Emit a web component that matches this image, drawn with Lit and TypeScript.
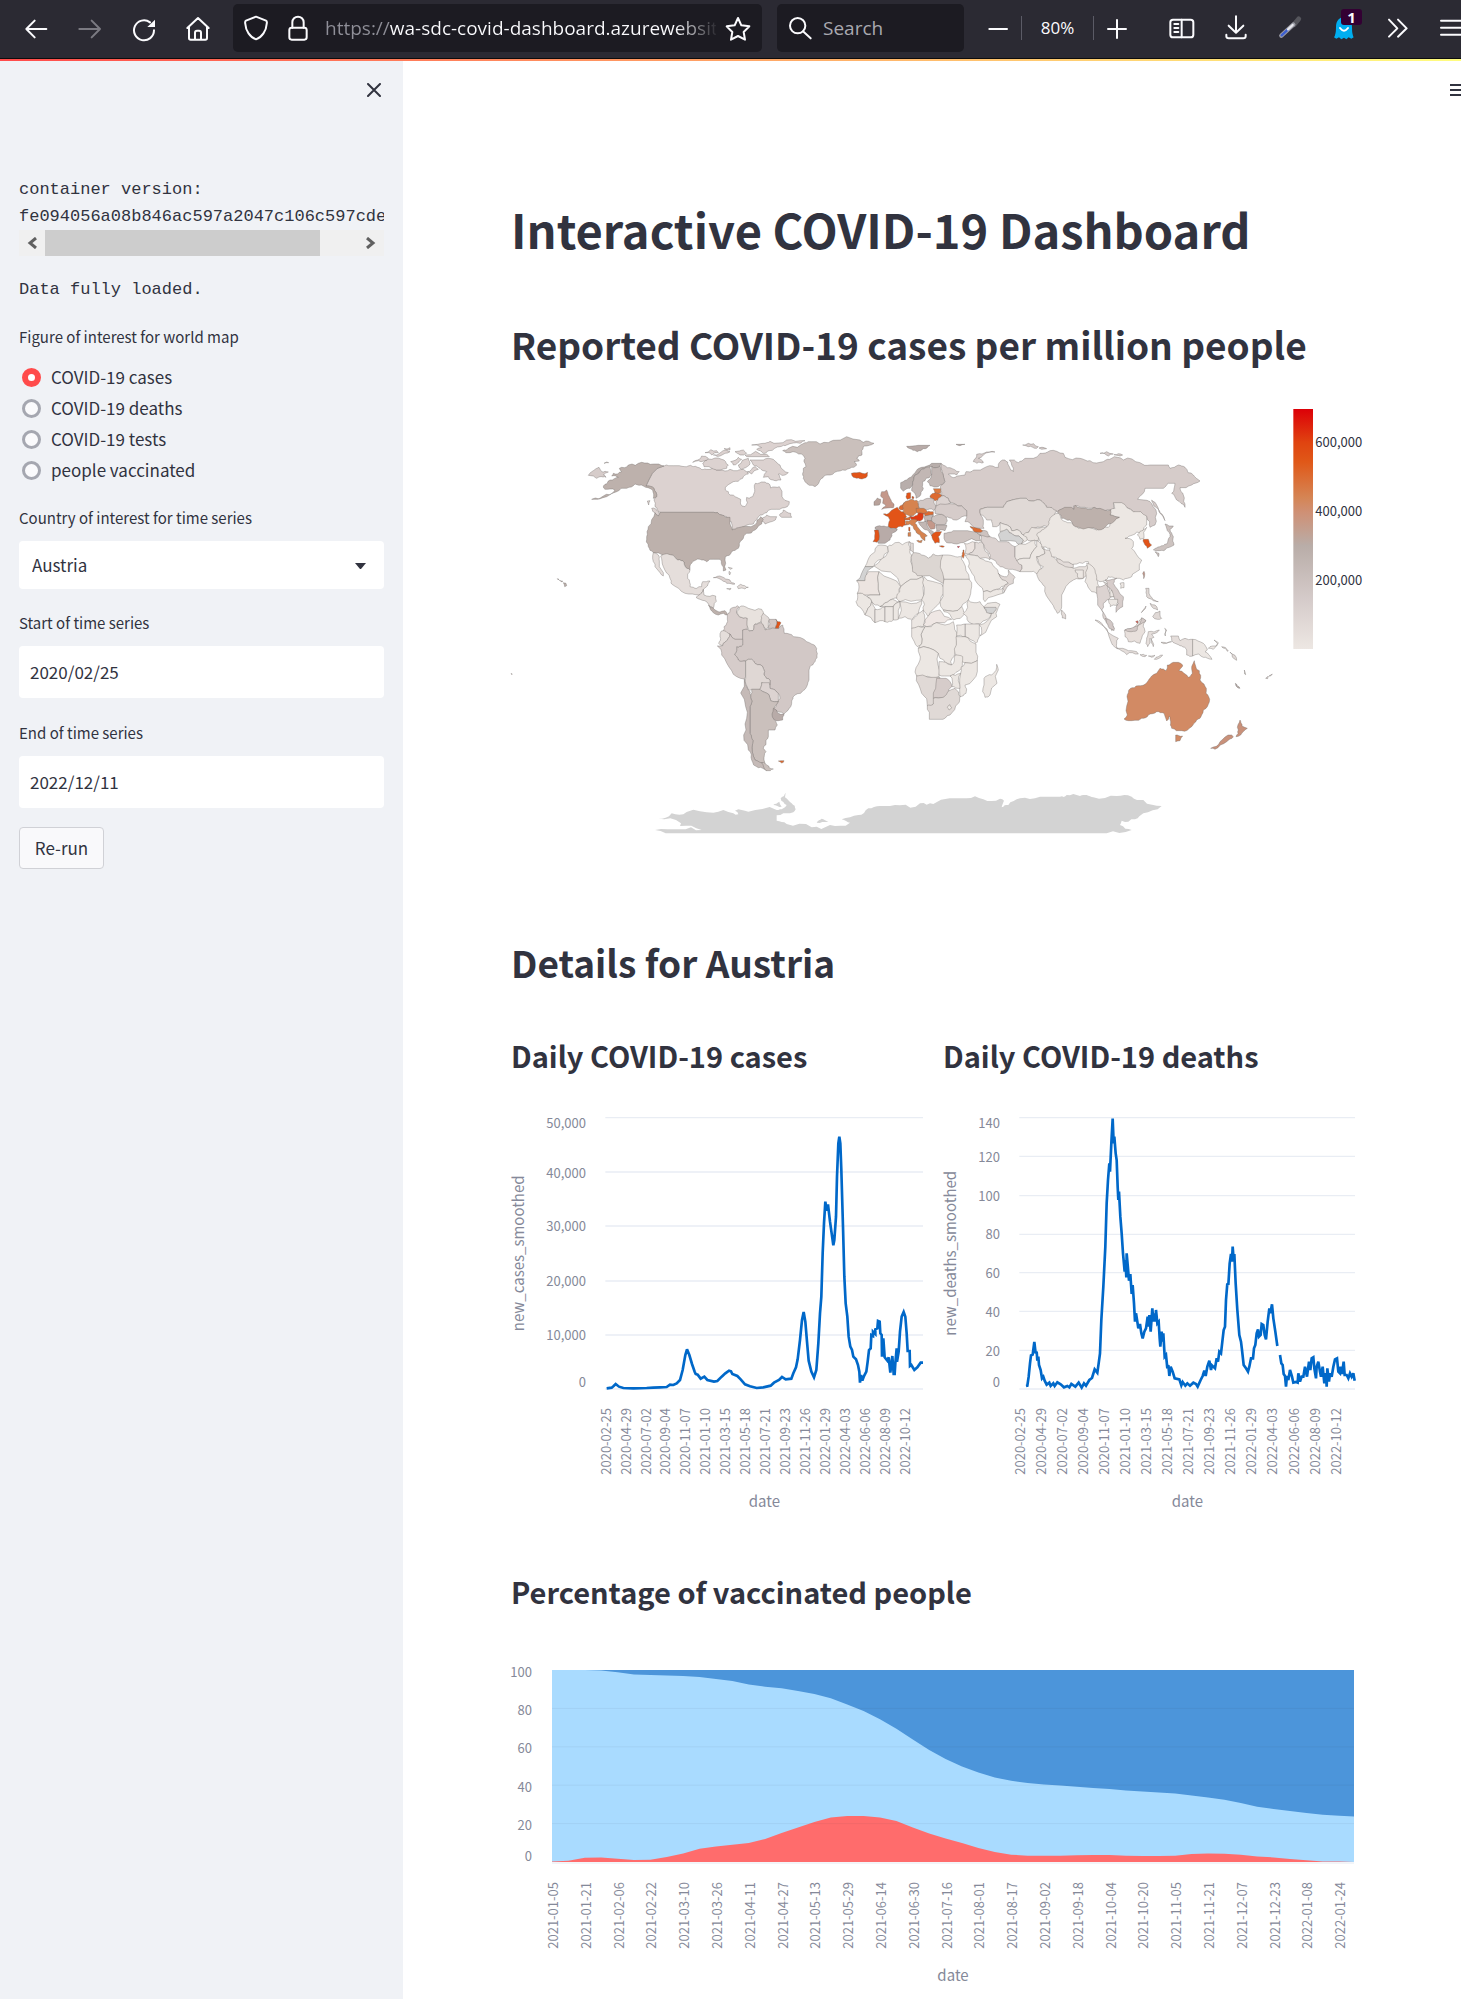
import { LitElement, html, svg, css } from "lit";
import { customElement, state } from "lit/decorators.js";

type Shape = [fill: string, points: string];

/* ---------- world map geometry (three units per pixel) ---------- */

const AMERICAS: Shape[] = [
  ["#cac0bc", "848,152 865,145 915,128 935,125 985,128 1000,121 1080,120 1090,127 1122,130 1108,136 1090,140 1086,165 1070,175 1078,183 1062,185 1070,195 1050,205 1020,213 990,225 972,228 958,245 945,260 928,256 915,245 908,225 910,205 918,200 912,185 915,175 905,162 870,158"],
  ["#dcd2d0", "492,198 520,197 555,200 572,196 600,204 620,208 660,210 690,208 712,212 730,208 745,222 728,235 700,245 680,258 676,270 690,285 710,292 722,298 726,318 735,320 742,308 740,292 758,290 764,275 766,250 790,246 808,252 812,264 838,260 846,290 868,305 862,320 830,328 800,338 780,345 770,358 760,372 735,378 710,385 697,390 694,365 680,350 665,345 640,337 480,337 465,320 462,300 470,290 462,265 438,258"],
  ["#dcd2d0", "780,355 800,345 812,350 830,350 826,360 795,372 788,365"],
  ["#dcd2d0", "838,345 850,330 872,340 875,352 845,352"],
  ["#dcd2d0", "578,187 605,168 625,175 612,183"],
  ["#dcd2d0", "608,190 625,177 665,178 685,195 680,205 640,207 612,200"],
  ["#dcd2d0", "615,158 650,152 655,158 635,165"],
  ["#dcd2d0", "640,165 680,150 690,155 660,168"],
  ["#dcd2d0", "672,146 690,143 690,150"],
  ["#dcd2d0", "755,135 790,130 810,124 860,120 915,122 900,130 860,135 840,140 808,152 790,160 770,148 785,143"],
  ["#dcd2d0", "705,155 730,150 740,160 720,165"],
  ["#dcd2d0", "735,165 800,163 808,170 740,170"],
  ["#dcd2d0", "692,185 715,172 725,178 712,190 700,195"],
  ["#dcd2d0", "750,180 790,180 820,178 840,195 865,218 855,225 835,222 843,240 825,242 805,230 790,232 800,215 780,205 760,195"],
  ["#dcd2d0", "715,195 745,175 748,195 725,208"],
  ["#dcd2d0", "742,215 765,200 775,208 755,222"],
  ["#bdb1ac", "492,198 438,258 462,265 470,290 460,295 458,270 430,258 405,252 380,265 350,275 320,290 275,298 310,288 345,270 315,268 310,258 330,240 355,232 335,228 340,220 365,215 358,205 385,195 425,187 460,192"],
  ["#d6ccca", "265,226 297,202 305,215 325,216 310,225 318,232 300,230 290,235 280,228"],
  ["#d6ccca", "312,190 320,186 326,188"],
  ["#dcd2d0", "455,325 475,335 478,348 465,340"],
  ["#dcd2d0", "442,303 450,302 446,315"],
  ["#bdb1ac", "480,337 640,337 665,345 690,352 697,390 715,383 765,374 782,350 790,358 785,372 765,390 740,400 730,415 718,430 715,445 695,455 676,470 678,510 670,513 664,490 660,478 640,478 620,485 600,478 575,490 570,510 560,505 548,482 530,478 520,466 460,458 445,440 440,410 445,380 465,338 475,348"],
  ["#e5dedb", "482,468 520,466 530,478 548,482 560,505 570,510 563,535 570,560 590,565 605,560 608,545 630,543 622,558 610,568 598,585 555,580 515,552 510,535 490,500"],
  ["#e5dedb", "460,458 475,465 478,490 490,528 480,518 465,492"],
  ["#e3dcd9", "598,585 610,568 612,585 647,588 642,618 640,625 625,612 600,598 588,592"],
  ["#bdb1ac", "625,615 640,625 655,635 675,632 682,645 670,640 655,645 640,638"],
  ["#dcd2d0", "640,533 665,530 690,540 705,552 680,550 660,537"],
  ["#e5dedb", "712,560 722,553 745,562 735,567 715,566"],
  ["#e5dedb", "680,566 693,565 690,570"],
  ["#e5dedb", "685,502 697,505 690,508"],
  ["#e5dedb", "687,514 692,518 689,525"],
  ["#bdb1ac", "190,548 198,550 200,557 194,560"],
  ["#bdb1ac", "178,541 188,543 186,546"],
  ["#bdb1ac", "172,536 176,537 175,540"],
  ["#bdb1ac", "33,821 36,821 36,824"],
  ["#d9cfcd", "682,645 690,628 712,617 718,622 710,640 718,650 742,655 742,688 728,690 728,718 705,718 690,702 670,692 680,670"],
  ["#e8e2de", "718,622 730,618 745,625 785,628 790,645 783,665 765,672 758,692 748,693 742,655 718,650 710,635"],
  ["#e3dcd9", "790,640 808,658 805,680 798,690 790,680 783,660"],
  ["#d2c7c5", "808,658 828,658 826,685 805,685"],
  ["#d2c8c6", "728,690 742,688 748,693 758,692 765,672 783,668 795,690 826,685 836,685 848,675 853,700 880,710 920,725 948,742 952,760 945,785 930,800 927,840 915,868 885,885 876,900 872,920 852,942 822,925 840,895 835,880 810,865 810,840 792,825 790,805 765,790 755,778 737,783 715,780 703,762 710,740 728,735"],
  ["#e25418", "828,658 843,668 836,685 826,685"],
  ["#e5dedb", "664,693 690,702 685,715 668,737 656,730 660,710"],
  ["#d6ccca", "668,737 685,715 690,702 705,718 728,718 728,735 710,740 703,762 715,780 737,783 737,830 733,837 695,812 665,765 652,738"],
  ["#dfd7d4", "737,783 755,778 765,790 790,805 792,825 810,840 810,855 785,848 780,868 755,868 745,870 737,835"],
  ["#dcd3d1", "785,848 808,848 810,865 835,880 835,905 812,902 805,882 780,868"],
  ["#cac0bc", "755,868 780,868 805,882 812,902 835,905 822,925 822,958 832,975 825,990 805,990 805,1010 798,1020 790,1045 798,1055 792,1080 795,1092 765,1080 758,1030 750,1000 750,920 752,885"],
  ["#b8aba8", "820,925 852,942 848,960 822,958"],
  ["#c5bab7", "733,837 745,870 752,885 750,920 750,1000 758,1030 765,1080 795,1095 800,1112 775,1103 755,1080 745,1050 738,990 737,920"],
  ["#cac0bc", "785,1088 800,1095 820,1107 800,1112"],
  ["#dd6a30", "835,1083 852,1082 845,1089"],
];

const AFRICA_EURASIA: Shape[] = [
  ["#e25418", "34,160 50,158 83,157 82,168 60,176 40,172"],
  ["#d6ccca", "303,130 330,143 358,155 350,165 325,162 345,172 375,165 378,155 400,150 440,140 475,142 480,125 495,120 505,135 512,150 520,155 515,135 508,120 535,128 555,115 600,100 630,92 670,100 675,112 720,115 750,122 790,125 815,115 850,120 900,128 930,135 985,135 990,145 1015,135 1035,142 1060,165 1080,183 1055,195 1020,203 1030,225 1035,262 1010,240 995,220 1005,190 985,190 970,205 915,205 893,238 930,245 948,270 945,315 930,322 920,290 880,275 845,250 820,250 822,265 810,270 780,268 745,265 700,258 702,268 665,268 650,275 620,262 600,240 575,243 540,235 500,245 490,262 450,262 420,268 422,285 430,300 432,325 400,320 375,305 380,288 380,272 345,252 333,248 325,235 305,228 302,206 315,185 308,160"],
  ["#b8aba8", "200,79 235,76 270,76 250,86 232,95 215,88"],
  ["#b8aba8", "348,73 375,73 360,77"],
  ["#d6ccca", "400,125 410,103 440,96 465,96 430,105 415,115 430,128 410,130"],
  ["#d6ccca", "548,75 565,70 595,80 590,85 565,80"],
  ["#d6ccca", "597,84 620,86 605,88"],
  ["#d6ccca", "780,100 820,102 805,108"],
  ["#d6ccca", "822,104 848,105 840,108"],
  ["#c4988a", "125,215 140,210 145,225 150,235 162,252 160,263 125,268 138,258 128,250 130,235 122,228"],
  ["#b8a29b", "102,245 112,234 122,238 118,255 102,256"],
  ["#b8aeab", "182,188 200,180 225,158 245,142 275,130 303,130 300,138 275,140 245,148 225,165 218,195 210,205 190,214 182,205"],
  ["#c2b7b4", "218,195 225,165 245,148 270,140 275,165 258,175 248,185 250,205 240,228 228,235 215,212"],
  ["#c2b7b4", "275,140 300,138 308,160 314,185 295,200 270,197 262,185 275,165"],
  ["#e25418", "200,220 212,218 212,235 202,238"],
  ["#e25418", "216,229 222,231 220,237 216,235"],
  ["#dd7a40", "280,206 302,206 302,220 285,218"],
  ["#dd6a30", "270,228 285,218 305,225 302,235 285,243 270,232"],
  ["#d2c8c6", "235,245 262,235 282,238 288,258 282,272 255,268 235,260"],
  ["#dd6a30", "180,258 193,247 193,262 188,270 176,265"],
  ["#e25418", "130,282 148,278 160,268 172,262 190,275 200,290 195,300 198,315 175,320 168,326 145,320 150,300 145,290"],
  ["#d6834f", "195,245 215,238 233,243 237,262 228,280 210,288 195,282 190,265"],
  ["#b8aba8", "105,322 118,317 145,320 172,327 155,342 150,360 135,370 115,370 112,340"],
  ["#e25418", "103,330 115,330 110,367 99,365"],
  ["#dd6a30", "193,292 215,288 210,300 195,300"],
  ["#dd7a40", "228,265 245,265 262,275 250,282 230,278"],
  ["#dd6a30", "252,280 280,275 280,283 255,288"],
  ["#e03a12", "210,290 232,286 235,279 250,280 248,298 230,304 212,295"],
  ["#c2b7b4", "250,290 280,284 275,302 255,305"],
  ["#d6834f", "195,305 215,298 232,300 225,310 240,330 262,348 255,350 255,362 245,355 240,345 222,328 210,312 198,315"],
  ["#d6834f", "230,362 247,360 244,368"],
  ["#d6834f", "204,338 212,337 212,349 204,349"],
  ["#e25418", "206,322 210,322 210,334 206,332"],
  ["#c2b7b4", "235,305 255,303 262,318 270,330 280,335 275,348 262,330 240,315"],
  ["#c4988a", "262,300 274,302 286,314 284,326 272,328 264,316"],
  ["#cdc3c0", "278,288 300,283 318,290 322,303 318,312 290,315 275,302"],
  ["#c2b7b4", "288,315 320,315 315,332 290,333"],
  ["#e25418", "275,345 288,335 305,335 300,345 295,350 298,368 285,370 278,358"],
  ["#e25418", "298,378 313,379 310,382"],
  ["#dcd3d1", "288,245 305,228 325,235 333,248 320,260 288,258"],
  ["#d6ccca", "288,258 345,252 380,272 380,288 355,298 345,300 335,295 318,292 300,283 285,280"],
  ["#cdc3c0", "312,340 340,332 375,332 405,335 420,345 422,362 370,368 350,372 320,368"],
  ["#cdc3c0", "405,335 440,333 450,350 435,355 422,345"],
  ["#dd6a30", "390,319 428,333 423,337 403,335"],
  ["#dc0020", "351,380 359,379 356,383"],
  ["#ece4e0", "373,370 405,367 405,385 385,403 375,400"],
  ["#dd6a30", "369,390 372,390 370,415 365,408"],
  ["#e3dcd9", "405,367 425,365 445,400 450,420 420,415 385,403 405,385"],
  ["#ece7e3", "375,405 385,403 420,415 455,428 475,460 490,475 505,478 500,498 470,508 430,515 405,480 385,440"],
  ["#ece7e3", "430,515 470,508 490,503 488,520 435,545"],
  ["#dfd7d4", "475,460 500,470 505,450 525,472 520,490 490,520 488,503 505,490"],
  ["#dcd3d1", "420,345 450,350 475,365 500,365 525,380 525,410 545,435 540,455 495,445 470,430 450,415 435,385 425,365"],
  ["#e0d9d6", "420,268 450,262 490,262 500,245 540,235 575,243 600,240 620,262 650,272 645,290 625,320 600,322 575,325 550,345 535,330 515,332 480,308 470,320 458,320 455,300 440,300 422,285"],
  ["#ece7e3", "480,308 515,332 535,330 550,345 575,345 560,362 545,372 550,360 520,345 500,328 480,335"],
  ["#d3d3d3", "475,345 500,328 520,345 550,360 540,375 510,362 480,362"],
  ["#e8e2de", "550,345 575,322 622,325 600,345 595,362 565,362"],
  ["#ece7e3", "525,380 545,372 585,360 590,380 570,415 530,422 525,400"],
  ["#ece7e3", "530,422 570,415 590,380 590,362 610,380 615,400 590,410 605,450 590,462 575,455 540,455 545,435"],
  ["#e6e0dc", "605,382 635,390 650,420 700,445 735,440 750,430 760,445 735,470 700,480 665,525 665,560 652,580 635,550 615,500 605,488 590,462 610,440 590,410 615,400"],
  ["#e3dcd9", "650,415 700,433 700,443 655,429"],
  ["#ece7e3", "705,450 730,450 730,475 715,475"],
  ["#e3dcd9", "665,570 677,585 677,597 667,594"],
  ["#ece7e3", "120,375 143,380 145,395 105,430 100,440 75,440 92,405 110,380"],
  ["#d3d3d3", "75,440 100,440 80,460 72,482 50,482"],
  ["#ece7e3", "143,380 165,368 208,365 210,385 215,405 218,445 248,470 182,500 102,438 145,395"],
  ["#e0d9d6", "208,365 220,370 220,398 210,390"],
  ["#dcd6d2", "220,398 245,405 265,415 280,402 308,405 312,492 250,468 218,455"],
  ["#ece7e3", "308,405 340,408 365,410 370,425 388,478 312,478"],
  ["#ece4e0", "50,482 75,482 85,455 117,455 120,525 70,525 52,520"],
  ["#ece7e3", "117,455 182,500 180,530 150,540 120,560 95,545 80,528 120,525"],
  ["#ece7e3", "182,500 248,470 252,490 245,540 180,545 170,530"],
  ["#ece7e3", "252,470 305,492 302,545 265,590 250,570 245,540"],
  ["#ece7e3", "312,478 388,478 395,500 385,540 365,560 310,570 300,545"],
  ["#ece7e3", "52,520 80,528 95,545 75,585 48,545"],
  ["#ece7e3", "95,545 105,565 105,608 75,585"],
  ["#ece7e3", "105,568 135,560 135,605 105,608"],
  ["#ece7e3", "120,560 150,540 180,545 160,560 135,560"],
  ["#ece7e3", "135,560 160,560 160,600 135,605"],
  ["#ece7e3", "160,560 180,545 175,598 160,600"],
  ["#ece7e3", "180,545 245,542 235,580 215,598 175,595"],
  ["#ece7e3", "235,580 250,570 255,600 250,620 215,625 215,600"],
  ["#efe7e4", "255,600 300,570 335,598 290,608 250,615"],
  ["#ece7e3", "310,570 365,560 375,580 340,600 312,575"],
  ["#ece7e3", "385,540 420,545 440,575 455,580 420,612 385,605 370,580"],
  ["#ece7e3", "432,560 480,553 470,590 420,648 418,615 455,580"],
  ["#d3d3d3", "432,562 468,562 460,580 440,578"],
  ["#ece7e3", "375,612 418,612 418,650 408,670 375,650"],
  ["#ece7e3", "350,615 375,612 375,650 348,648"],
  ["#ece7e3", "255,620 290,608 340,605 350,650 345,700 335,735 300,715 295,700 235,685 245,670"],
  ["#ece7e3", "215,625 255,620 245,670 232,680 215,650"],
  ["#ece7e3", "348,650 375,650 408,672 412,722 375,728 345,700"],
  ["#ece7e3", "235,685 295,700 297,770 230,768 240,720"],
  ["#ece7e3", "297,725 335,735 345,705 368,710 365,745 330,768 297,765"],
  ["#ece7e3", "375,728 412,722 412,755 375,795 378,820 360,830 362,760"],
  ["#ece7e3", "330,768 362,760 360,805 335,800"],
  ["#e0d9d6", "230,768 300,772 285,820 278,855 262,857 245,820"],
  ["#d6ccca", "290,775 318,775 335,800 310,832 280,835"],
  ["#e0d9d6", "262,857 280,852 280,835 310,832 345,805 360,830 355,850 330,885 300,898 268,898"],
  ["#ece7e3", "322,862 330,854 335,862 327,870"],
  ["#ece7e3", "470,733 475,750 450,825 435,832 428,815 432,775 455,765"],
];

const ASIA_PACIFIC: Shape[] = [
  ["#ece7e3", "175,340 185,358 210,368 235,385 290,390 325,382 330,372 358,352 330,345 330,330 345,325 340,308 365,308 400,335 440,348 440,375 425,395 398,405 375,415 400,425 395,445 425,480 418,510 395,530 370,540 345,535 325,530 300,545 285,530 265,485 230,492 180,478 155,470 150,445 125,440 118,420 110,405 125,390 145,375 150,355"],
  ["#bdb1ac", "172,337 185,327 222,328 225,316 265,328 300,325 332,330 330,345 358,352 325,372 295,390 235,382 210,360 185,355"],
  ["#ece7e3", "360,550 372,548 372,563 362,565"],
  ["#ece7e3", "260,490 285,510 290,540 298,560 290,580 275,575 255,545"],
  ["#dcd3d1", "290,560 320,550 345,590 320,600 310,610 305,630 325,660 342,685 335,692 315,660 305,630"],
  ["#ece7e3", "310,545 330,550 350,590 330,590"],
  ["#d6ccca", "315,540 350,535 340,550 370,590 368,620 348,637 355,610 335,570"],
  ["#ece7e3", "325,598 353,598 351,616 331,620"],
  ["#d2c8c6", "315,655 335,665 342,692 325,680"],
  ["#e5dedb", "285,660 305,670 355,715 352,745 335,730"],
  ["#e5dedb", "350,745 385,752 415,762 380,764"],
  ["#e5dedb", "420,764 440,766 435,770"],
  ["#e5dedb", "445,768 465,766 455,772"],
  ["#e5dedb", "463,778 488,765 475,770"],
  ["#cdc3c0", "460,450 480,440 500,432 510,410 500,385 495,372 520,378 510,388 520,410 522,435 495,450 478,452"],
  ["#cdc3c0", "465,455 477,460 475,470"],
  ["#d6ccca", "455,300 470,315 492,352 495,362 480,340 462,318"],
  ["#ece7e3", "412,405 432,388 440,382 432,415 420,418"],
  ["#e25418", "430,418 445,418 455,435 442,445 435,435"],
  ["#c4988a", "428,520 432,514 434,526 431,536"],
  ["#e0d9d6", "437,565 447,565 447,580 457,595 475,605 460,602 440,590"],
  ["#e0d9d6", "450,610 465,615 473,630 460,625"],
  ["#e0d9d6", "458,650 480,633 485,655 472,658"],
  ["#e0d9d6", "424,638 438,618 436,626"],
  ["#e8e0dc", "373,690 405,680 425,655 438,662 430,680 432,700 420,730 385,725 375,710"],
  ["#d2c8c6", "375,690 405,680 425,653 438,662 415,675 410,692 390,695"],
  ["#dc2010", "407,665 413,662 413,670"],
  ["#e5dedb", "445,695 478,690 455,702 462,712 455,715 460,740 450,715 443,740 440,720"],
  ["#e5dedb", "494,685 500,690 496,708"],
  ["#e5dedb", "483,727 515,725 500,729"],
  ["#e5dedb", "512,708 535,708 540,722 555,715 578,718 578,768 560,765 560,750 545,738 525,730"],
  ["#ece7e3", "578,718 610,730 622,750 615,755 636,778 610,772 595,762 578,768"],
  ["#ece7e3", "625,745 650,738 655,728 642,720 652,730 640,748"],
  ["#e0d9d6", "665,740 685,752 682,754"],
  ["#e0d9d6", "690,756 705,766 710,781"],
  ["#cac0bc", "733,810 737,824 734,822"],
  ["#b8aba8", "706,850 720,865 714,864"],
  ["#dcd3d1", "797,835 805,828 803,836"],
  ["#dcd3d1", "807,828 817,822 812,828"],
  ["#d28a64", "390,866 415,857 440,848 455,828 480,805 498,812 502,795 520,787 548,795 537,812 565,832 573,825 575,800 583,782 590,808 598,812 600,840 612,852 618,880 626,890 622,920 605,945 590,960 575,980 545,992 515,985 512,965 508,948 500,963 492,940 470,935 445,945 425,955 385,962 372,957 382,945 381,890"],
  ["#d28a64", "527,1005 548,1008 540,1022 527,1025"],
  ["#c9917a", "720,960 726,978 742,985 722,1005 708,1010 715,990"],
  ["#c9917a", "632,1045 660,1025 695,1005 700,1010 680,1025 645,1048"],
];

const ANTARCTICA = [
  "530,1300 465,1290 540,1288 605,1290 540,1278 543,1270 475,1256 515,1240 560,1236 640,1238 700,1240 715,1243 705,1232 745,1235 830,1230 850,1225 860,1215 842,1195 857,1178 855,1192 875,1210 887,1228 870,1240 830,1246 830,1262 860,1272 935,1282 990,1275 1050,1268 1025,1258 1075,1245 1105,1225 1140,1218 1200,1216 1260,1210 1300,1212 1400,1195 1450,1198 1500,1196 1512,1202 1505,1222 1525,1215 1560,1195 1620,1190 1680,1190 1700,1185 1740,1188 1760,1185 1780,1192 1850,1188 1895,1190 1930,1200 1985,1218 1930,1240 1905,1258 1865,1262 1860,1275 1895,1290 1820,1300",
  "950,1268 965,1256 985,1265",
  "820,1215 838,1205 845,1220",
];

/** Splits long edges at a nudged midpoint; both sides of a shared border get the same nudge. */
function coastline(points: string): string {
  const pts = points.split(" ").map((p) => p.split(",").map(Number));
  const out: string[] = [];
  const split = (a: number[], b: number[], depth: number) => {
    const len = Math.hypot(b[0] - a[0], b[1] - a[1]);
    if (depth === 0 || len < 9 || a[0] === b[0] || a[1] === b[1]) return;
    const [p, q] = a[0] < b[0] ? [a, b] : [b, a];
    const h = Math.sin(p[0] * 12.9 + p[1] * 78.2 + q[0] * 37.7 + q[1] * 9.1) * 43758.5;
    const k = (h - Math.floor(h) - 0.5) * 0.34;
    const m = [
      Math.round((p[0] + q[0]) / 2 - (q[1] - p[1]) * k),
      Math.round((p[1] + q[1]) / 2 + (q[0] - p[0]) * k),
    ];
    split(a, m, depth - 1);
    out.push(m.join(","));
    split(m, b, depth - 1);
  };
  pts.forEach((a, i) => {
    out.push(a.join(","));
    split(a, pts[(i + 1) % pts.length], 2);
  });
  return out.join(" ");
}

const land = (shapes: Shape[]) =>
  shapes.map(([fill, pts]) => svg`<polygon class="land" fill=${fill} points=${coastline(pts)}></polygon>`);

/* ---------- time series ---------- */

interface LineSpec {
  label: string;
  viewBox: string;
  x0: number;
  x1: number;
  yRight: number;
  ticks: [text: string, line: number, middle: number][];
  firstDate: number;
  dateStep: number;
  titleX: number;
  dateX: number;
  paths: string[];
}

const DATES = [
  "2020-02-25", "2020-04-29", "2020-07-02", "2020-09-04", "2020-11-07", "2021-01-10", "2021-03-15", "2021-05-18",
  "2021-07-21", "2021-09-23", "2021-11-26", "2022-01-29", "2022-04-03", "2022-06-06", "2022-08-09", "2022-10-12",
];

const CASES: LineSpec = {
  label: "new_cases_smoothed",
  viewBox: "33 270 1236 1230",
  x0: 316,
  x1: 1269,
  yRight: 258,
  ticks: [
    ["50,000", 293, 311], ["40,000", 456, 460], ["30,000", 618, 620],
    ["20,000", 783, 783], ["10,000", 945, 946], ["0", 1107, 1088],
  ],
  firstDate: 318,
  dateStep: 59.8,
  titleX: 61,
  dateX: 793,
  paths: [
    "320,1105 335,1103 341,1098 347,1092 357,1100 370,1104 400,1105 440,1104 460,1103 480,1102 500,1101 510,1094 520,1095 530,1090 540,1080 548,1050 556,1005 561,988 568,1005 576,1032 584,1055 587,1062 593,1064 602,1076 613,1070 622,1080 642,1085 652,1083 665,1070 676,1060 687,1052 693,1054 697,1062 712,1068 722,1078 735,1093 750,1099 770,1104 790,1102 812,1097 822,1088 837,1080 846,1071 857,1078 874,1076 880,1060 888,1042 893,1018 900,960 906,900 911,876 916,905 921,965 926,1022 934,1055 942,1072 949,1050 955,970 960,880 964,830 968,700 972,610 976,545 980,572 984,553 990,605 995,640 1000,676 1003,660 1008,590 1011,470 1015,370 1018,350 1021,370 1024,450 1029,620 1033,770 1037,850 1042,890 1046,950 1051,980 1056,990 1060,1010 1068,1018 1074,1035 1078,1055 1080,1088 1083,1065 1087,1082 1092,1068 1099,1055 1103,1025 1107,990 1112,985 1114,945 1119,948 1119,935 1126,942 1126,928 1132,925 1134,903 1139,905 1141,940 1145,945 1146,1010 1150,955 1154,1012 1162,1022 1166,1012 1171,1058 1177,1008 1181,1062 1184,1062 1186,1030 1190,985 1191,1025 1196,995 1200,935 1205,890 1211,876 1216,890 1220,940 1223,993 1229,993 1230,1038 1234,1035 1243,1050 1252,1042 1262,1028 1269,1028",
  ],
};

const DEATHS: LineSpec = {
  label: "new_deaths_smoothed",
  viewBox: "39 270 1236 1230",
  x0: 268,
  x1: 1275,
  yRight: 210,
  ticks: [
    ["140", 293, 311], ["120", 409, 411], ["100", 527, 529], ["80", 643, 644],
    ["60", 758, 760], ["40", 874, 877], ["20", 991, 993], ["0", 1107, 1088],
  ],
  firstDate: 270,
  dateStep: 63.2,
  titleX: 67,
  dateX: 772,
  paths: [
    "288,1098 292,1097 296,1070 300,1030 303,1006 308,1004 313,966 317,1000 320,995 322,1022 325,1010 327,1035 332,1050 336,1075 340,1070 344,1082 350,1094 358,1088 362,1098 370,1090 374,1098 382,1087 392,1093 402,1102 412,1098 418,1102 424,1092 436,1100 446,1088 455,1103 462,1090 468,1097 478,1080 486,1074 494,1048 502,1058 506,1030 510,1000 514,900 520,800 526,680 530,550 534,480 538,430 540,455 544,370 548,296 551,370 553,350 557,400 560,420 563,500 565,540 567,515 571,590 575,640 579,700 584,755 586,720 589,772 590,700 594,745 597,782 601,762 605,822 608,795 612,850 615,905 618,880 622,905 625,925 630,912 634,940 638,955 643,935 648,925 653,890 656,920 658,885 662,935 667,865 670,905 673,880 676,905 678,870 682,910 686,905 689,955 691,980 695,935 697,965 700,940 704,1010 708,1005 712,1045 715,1035 718,1068 722,1040 728,1055 734,1075 748,1078 754,1096 758,1086 766,1097 772,1090 780,1097 790,1088 798,1092 803,1100 812,1080 818,1068 823,1052 827,1068 832,1040 838,1022 843,1050 846,1036 855,1045 860,1015 864,1025 868,995 873,1000 877,965 881,930 885,920 888,840 892,790 895,795 899,730 903,702 906,725 908,680 911,720 913,702 917,790 922,870 928,945 933,965 936,990 941,1035 948,1045 954,1055 958,1040 963,1015 969,1015 972,985 976,975 980,940 984,928 987,950 992,945 995,912 1000,915 1004,945 1008,958 1013,905 1018,865 1021,880 1026,853 1030,895 1036,935 1042,978",
    "1050,1005 1054,1030 1058,1035 1061,1062 1065,1068 1068,1100 1071,1068 1075,1080 1080,1050 1086,1070 1090,1088 1098,1086 1103,1088 1105,1060 1110,1085 1115,1070 1120,1070 1125,1040 1131,1070 1137,1025 1141,1050 1145,1015 1150,1012 1153,1045 1158,1075 1160,1040 1165,1025 1170,1055 1173,1070 1178,1040 1183,1090 1188,1060 1190,1100 1192,1045 1197,1085 1200,1060 1205,1070 1210,1040 1215,1018 1221,1015 1225,1055 1230,1060 1232,1040 1236,1062 1241,1025 1244,1065 1250,1065 1255,1075 1260,1060 1265,1070 1270,1060 1274,1082",
  ],
};

const lineChart = (s: LineSpec) => html`
  <svg class="chart" viewBox=${s.viewBox} role="img" aria-label=${s.label}>
    ${s.ticks.map(([text, line, middle]) => svg`
      <line class="grid" x1=${s.x0} x2=${s.x1} y1=${line} y2=${line}></line>
      <text class="tick" text-anchor="end" x=${s.yRight} y=${middle + 14}>${text}</text>`)}
    ${DATES.map((d, i) => svg`
      <text class="tick" text-anchor="end"
        transform="translate(${s.firstDate + 14 + i * s.dateStep} 1164) rotate(-90)">${d}</text>`)}
    <text class="axis" text-anchor="middle" transform="translate(${s.titleX + 10} 700) rotate(-90)">${s.label}</text>
    <text class="axis" text-anchor="middle" x=${s.dateX} y="1462">date</text>
    ${s.paths.map((p) => svg`<polyline class="series" points=${p}></polyline>`)}
  </svg>`;

/* ---------- vaccination area chart: one value every eight days ---------- */

const VACC_DATES = [
  "2021-01-05", "2021-01-21", "2021-02-06", "2021-02-22", "2021-03-10", "2021-03-26", "2021-04-11", "2021-04-27",
  "2021-05-13", "2021-05-29", "2021-06-14", "2021-06-30", "2021-07-16", "2021-08-01", "2021-08-17", "2021-09-02",
  "2021-09-18", "2021-10-04", "2021-10-20", "2021-11-05", "2021-11-21", "2021-12-07", "2021-12-23", "2022-01-08",
  "2022-01-24",
];

const NOT_FULLY = [
  100, 100, 100, 99.8, 98.8, 97.7, 97.4, 97.1, 96.9, 96.4, 95.3, 94.3, 92.5, 91.3, 90.5, 89.1, 87.5, 85.3, 82.1, 78.7,
  74.4, 69.4, 63.8, 58.4, 53.7, 49.7, 46.6, 44, 42.3, 41.1, 40.4, 39.9, 39.2, 38.5, 38, 37.3, 36.7, 36.2, 35.7, 34.7,
  33.6, 32.4, 30.7, 28.8, 27.6, 26.5, 25.5, 24.6, 24.1, 23.7,
];

const PARTIAL = [
  0.2, 0.7, 2.2, 2.4, 1.7, 1, 1.2, 2.6, 4.5, 6.9, 8.1, 9, 9.9, 12, 15.1, 18, 20.8, 23.2, 23.9, 23.9, 23.2, 21.3, 17.9,
  14.9, 12.3, 9.9, 7.3, 5.2, 3.8, 3.3, 3.3, 3.3, 3.5, 3.6, 3.6, 3.3, 3.1, 3.1, 3.3, 4.2, 4.5, 4.3, 3.8, 2.9, 2.4, 1.6,
  0.9, 0.3, 0.2, 0,
];

const PLOT = { left: 41, right: 843, top: 10, bottom: 202 };

const area = (values: number[]) => {
  const pts = values.map((v, i) => {
    const x = Math.min(PLOT.left + i * 16.4, PLOT.right);
    return `${x.toFixed(1)},${(PLOT.bottom - (v / 100) * (PLOT.bottom - PLOT.top)).toFixed(1)}`;
  });
  return `${PLOT.left},${PLOT.bottom} ${pts.join(" ")} ${PLOT.right},${PLOT.bottom}`;
};

const areaChart = () => html`
  <svg class="chart" viewBox="0 0 844 339" role="img" aria-label="Percentage of vaccinated people">
    <rect fill="#4c95da" x="41" y="10" width="802" height="192"></rect>
    <polygon fill="#a9dbff" points=${area(NOT_FULLY)}></polygon>
    <polygon fill="#ff6c6c" points=${area(PARTIAL)}></polygon>
    ${[80, 60, 40, 20].map((v) => svg`
      <line class="veil" x1="41" x2="843" y1=${202 - v * 1.92} y2=${202 - v * 1.92}></line>`)}
    <line class="base" x1="41" x2="843" y1="203" y2="203"></line>
    ${([[100, 12], [80, 50], [60, 88], [40, 127], [20, 165], [0, 196]]).map(([v, y]) => svg`
      <text class="tick px" text-anchor="end" x="21" y=${y + 5}>${v}</text>`)}
    ${VACC_DATES.map((d, i) => svg`
      <text class="tick px" text-anchor="end" transform="translate(${47 + i * 32.8} 222) rotate(-90)">${d}</text>`)}
    <text class="axis px" text-anchor="middle" x="442" y="321">date</text>
  </svg>`;

/* ---------- toolbar icons ---------- */

const icon = (cx: number, body: unknown) => html`
  <svg class="icon" viewBox="${cx - 42} 42 84 84" aria-hidden="true">${body}</svg>`;

const ICONS = {
  back: icon(108, svg`<path d="M79 87H139M104 62 79 87l25 25"/>`),
  forward: icon(270, svg`<path d="M238 87H300M275 62l25 25-25 25"/>`),
  reload: icon(432, svg`<path d="M462 91A30 30 0 1 1 450 67"/><path fill="currentColor" stroke="none" d="M465 59V81H442Z"/>`),
  home: icon(592, svg`<path d="M560 84 592 54 624 84M565 82V114Q565 119 570 119H614Q619 119 619 114V82M583 118V98Q583 92 589 92H595Q601 92 601 98V118"/>`),
  shield: icon(768, svg`<path d="M768 50 798 62Q802 64 800 72C799 92 786 112 768 118 750 112 737 92 736 72Q734 64 738 62Z"/>`),
  lock: icon(894, svg`<rect x="868" y="83" width="52" height="36" rx="7"/><path d="M877 83V67a17 17 0 0 1 34 0V83"/>`),
  star: icon(108, svg`<path d="M108 54 118 76 142 79 125 96 129 119 108 108 87 119 91 96 74 79 98 76Z"/>`),
  search: icon(108, svg`<circle cx="98" cy="77" r="23"/><path d="M114 94 137 115"/>`),
  minus: icon(144, svg`<path d="M118 87H171"/>`),
  plus: icon(501, svg`<path d="M474 87H528M501 60V114"/>`),
  panel: icon(693, svg`<rect x="658" y="59" width="69" height="53" rx="8"/><path d="M692 59V112M670 72H682M670 84H682M670 96H682"/>`),
  download: icon(854, svg`<path d="M854 49V96M832 77 854 98 876 77M825 104V109Q825 115 832 115H876Q883 115 883 109V104"/>`),
  pen: icon(1018, svg`<path stroke="#55555c" stroke-width="15" d="M1030 74 1044 57"/><path stroke="#9a9ba5" stroke-width="13" d="M992 107 1028 74"/><path stroke="#3d5fd0" stroke-width="7" d="M993 106 1012 88"/><path stroke="#e8e8ee" stroke-width="7" d="M1012 88 1026 75"/>`),
  ghost: icon(1180, svg`<path fill="#00aef0" stroke="none" d="M1150 112Q1156 104 1156 82C1156 62 1166 52 1180 52S1204 62 1204 82Q1204 104 1209 112L1202 116 1194 112 1187 118 1180 113 1172 118 1165 112 1157 116Z"/><path stroke="#fff" d="M1168 84Q1180 100 1192 84"/>`),
  more: icon(1340, svg`<path d="M1313 59 1338 85 1313 110M1340 59 1366 85 1340 110"/>`),
  menu: icon(1510, svg`<path d="M1477 62H1545M1477 83H1545M1477 104H1545"/>`),
};

const FIGURES = ["COVID-19 cases", "COVID-19 deaths", "COVID-19 tests", "people vaccinated"];

@customElement("app-root")
export class AppRoot extends LitElement {
  @state() private figure = 0;

  static styles = css`
    :host {
      display: block;
      min-height: 100vh;
      overflow: hidden;
      color: #31333f;
      background: #fff;
      font-family: "Noto Sans CJK SC", "Open Sans", sans-serif;
      font-size: 17px;
      line-height: 24px;
    }
    * { box-sizing: border-box; }
    button, input, select { font: inherit; color: inherit; margin: 0; }
    button { border: 0; padding: 0; background: none; cursor: pointer; }
    h1, h2, h3, p, pre { margin: 0; }
    svg { display: block; }

    .toolbar {
      display: flex;
      align-items: center;
      padding: 4px 0 6px 9px;
      border-bottom: 1px solid #0c0c0d;
      background: #2b2a33;
      color: #fbfbfe;
      font-family: "Open Sans", "Noto Sans", sans-serif;
    }
    .icon {
      width: 28px;
      height: 28px;
      flex: none;
      fill: none;
      stroke: currentColor;
      stroke-width: 6;
      stroke-linecap: round;
      stroke-linejoin: round;
    }
    .tool { display: grid; place-items: center; flex: none; width: 54px; height: 48px; position: relative; }
    .tool:disabled { color: #7b7a82; }
    .field {
      display: flex;
      align-items: center;
      height: 48px;
      border-radius: 5px;
      background: #1c1b22;
    }
    .url { flex: 1; min-width: 0; margin-left: 8px; padding: 0 10px 0 9px; gap: 14px; }
    .url input {
      flex: 1;
      min-width: 0;
      height: 40px;
      margin-left: -1px;
      border: 0;
      padding: 0;
      outline: 0;
      font-size: 19px;
      color: transparent;
      background: linear-gradient(90deg, #8f8f98 0 65px, #fbfbfe 65px 350px, #fbfbfe00 394px);
      -webkit-background-clip: text;
      background-clip: text;
    }
    .url .star { margin-left: -6px; }
    .search { flex: none; width: 187px; margin: 0 11px 0 15px; padding-left: 10px; gap: 8px; }
    .search input { width: 120px; border: 0; padding: 0; outline: 0; background: none; font-size: 19px; }
    .search input::placeholder { color: #a9a9b0; opacity: 1; }
    .zoom { display: flex; align-items: center; flex: none; margin-right: 15px; }
    .zoom .tool { width: 46px; }
    .level {
      width: 73px;
      height: 24px;
      border-left: 1px solid #5b5b66;
      border-right: 1px solid #5b5b66;
      font-size: 17px;
      line-height: 24px;
    }
    .last { margin-right: -18px; }
    .badge {
      position: absolute;
      left: 24px;
      top: 5px;
      width: 21px;
      height: 16px;
      border-radius: 3px;
      background: #330033;
      font-size: 15px;
      font-weight: 700;
      line-height: 16px;
      text-align: center;
    }
    .stripe { height: 2px; background: linear-gradient(90deg, #ff4b4b, #fffd80); }

    .page { display: grid; grid-template-columns: 403px minmax(0, 1fr); min-height: calc(100vh - 61px); }
    .sidebar { padding: 0 19px; background: #f0f2f6; }
    .close { display: block; width: 24px; height: 24px; margin: 17px -2px 74px auto; }
    .close svg { width: 14px; height: 14px; margin: auto; }
    .mono {
      font-family: "Liberation Mono", monospace;
      font-size: 17px;
      line-height: 27px;
      overflow: hidden;
    }
    .scroll { display: flex; height: 26px; background: #f0f0f0; }
    .scroll button { width: 26px; color: #606060; display: grid; place-items: center; }
    .track { flex: 1; }
    .thumb { width: 88%; height: 26px; background: #cdcdcd; }
    .loaded { margin: 20px 0 22px; }
    .label { display: block; padding: 0; font-size: 15px; line-height: 24px; }
    fieldset { border: 0; margin: 0; padding: 0; }
    .radios { display: grid; gap: 7px; margin: 16px 0 24px; }
    .radios label { display: flex; align-items: center; gap: 10px; height: 24px; padding-left: 3px; }
    .radios input {
      appearance: none;
      width: 19px;
      height: 19px;
      border: 3px solid #a5a7b0;
      border-radius: 50%;
      background: #fafafc;
    }
    .radios input:checked { border: 6px solid #ff4b4b; background: #fff; }
    .control {
      display: block;
      width: 100%;
      height: 52px;
      margin: 11px 0 23px;
      border: 0;
      border-radius: 4px;
      padding: 0 11px 2px;
      background: #fff;
      appearance: none;
    }
    .select { position: relative; }
    .select .control { height: 48px; margin-bottom: 22px; padding: 0 13px; }
    .select svg { position: absolute; right: 18px; top: 22px; width: 11px; height: 6px; }
    .run { width: 85px; height: 42px; margin-top: -4px; border: 1px solid #d0d1d6; border-radius: 4px; background: #f9f9fb; }

    .main { position: relative; min-width: 0; padding: 140px 106px 0 108px; }
    .burger { position: absolute; top: 17px; right: -10px; width: 24px; height: 24px; }
    h1 { font-size: 47px; font-weight: 700; line-height: 56px; margin-bottom: 65px; }
    h2 { font-size: 37px; font-weight: 600; line-height: 44px; }
    h3 { font-size: 29px; font-weight: 600; line-height: 36px; }
    .map { width: 100%; overflow: visible; margin: 34px 0 80px; }
    .land { stroke: #6b6664; stroke-opacity: 0.55; stroke-width: 2; stroke-linejoin: round; }
    .bar-label { font-size: 39px; fill: #31333f; }
    .columns { display: grid; grid-template-columns: 1fr 1fr; gap: 20px; margin: 53px 0 53px; }
    .columns h3 { margin-bottom: 37px; }
    .chart { width: 100%; overflow: visible; }
    .grid { stroke: #e9edf4; stroke-width: 4; }
    .veil { stroke: #31333f; stroke-opacity: 0.06; }
    .base { stroke: #e6eaf1; }
    .tick { font-size: 39px; fill: #858999; }
    .axis { font-size: 45px; fill: #858999; }
    .tick.px { font-size: 13px; }
    .axis.px { font-size: 15px; }
    .series { fill: none; stroke: #0068c9; stroke-width: 8; stroke-linejoin: miter; stroke-miterlimit: 3; }
    .vaccinated { margin-bottom: 51px; }
  `;

  private toolbar() {
    return html`
      <header class="toolbar">
        <button class="tool" aria-label="Back">${ICONS.back}</button>
        <button class="tool" aria-label="Forward" disabled>${ICONS.forward}</button>
        <button class="tool" aria-label="Reload">${ICONS.reload}</button>
        <button class="tool" aria-label="Home">${ICONS.home}</button>
        <div class="field url">
          ${ICONS.shield}${ICONS.lock}
          <input type="text" aria-label="Address" .value=${"https://wa-sdc-covid-dashboard.azurewebsites.net"} />
          <button class="star" aria-label="Bookmark">${ICONS.star}</button>
        </div>
        <div class="field search">
          ${ICONS.search}<input type="text" aria-label="Search" placeholder="Search" />
        </div>
        <div class="zoom">
          <button class="tool" aria-label="Zoom out">${ICONS.minus}</button>
          <button class="level">80%</button>
          <button class="tool" aria-label="Zoom in">${ICONS.plus}</button>
        </div>
        <button class="tool" aria-label="Sidebars">${ICONS.panel}</button>
        <button class="tool" aria-label="Downloads">${ICONS.download}</button>
        <button class="tool" aria-label="Color picker">${ICONS.pen}</button>
        <button class="tool" aria-label="Tracker blocker">${ICONS.ghost}<span class="badge">1</span></button>
        <button class="tool" aria-label="More tools">${ICONS.more}</button>
        <button class="tool last" aria-label="Menu">${ICONS.menu}</button>
      </header>
      <div class="stripe"></div>`;
  }

  private sidebar() {
    return html`
      <aside class="sidebar">
        <button class="close" aria-label="Close sidebar">
          <svg viewBox="0 0 14 14" stroke="#31333f" stroke-width="2" stroke-linecap="round"><path d="M1 1 13 13M13 1 1 13"></path></svg>
        </button>
        <pre class="mono">container version:
fe094056a08b846ac597a2047c106c597cde7b</pre>
        <div class="scroll">
          <button aria-label="Scroll left">
            <svg width="10" height="12" viewBox="0 0 10 12" fill="none" stroke="currentColor" stroke-width="3"><path d="M9 1 3 6 9 11"></path></svg>
          </button>
          <div class="track"><div class="thumb"></div></div>
          <button aria-label="Scroll right">
            <svg width="10" height="12" viewBox="0 0 10 12" fill="none" stroke="currentColor" stroke-width="3"><path d="M1 1 7 6 1 11"></path></svg>
          </button>
        </div>
        <p class="mono loaded">Data fully loaded.</p>
        <fieldset>
          <legend class="label">Figure of interest for world map</legend>
          <div class="radios">
            ${FIGURES.map((f, i) => html`
              <label><input type="radio" name="figure" .checked=${i === this.figure} @change=${() => (this.figure = i)} />${f}</label>`)}
          </div>
        </fieldset>
        <label class="label" for="country">Country of interest for time series</label>
        <div class="select">
          <select class="control" id="country"><option>Austria</option></select>
          <svg viewBox="0 0 11 6" fill="#31333f" aria-hidden="true"><path d="M0 0H11L6 6H5Z"></path></svg>
        </div>
        <label class="label" for="start">Start of time series</label>
        <input class="control" id="start" type="text" value="2020/02/25" />
        <label class="label" for="end">End of time series</label>
        <input class="control" id="end" type="text" value="2022/12/11" />
        <button class="run">Re-run</button>
      </aside>`;
  }

  private map() {
    return html`
      <svg class="map" viewBox="33 0 2532 1380" role="img" aria-label="World map of reported cases per million people">
        <defs>
          <linearGradient id="scale" x1="0" y1="0" x2="0" y2="1">
            <stop offset="0" stop-color="#dc0008"></stop>
            <stop offset="0.14" stop-color="#e04410"></stop>
            <stop offset="0.22" stop-color="#e05818"></stop>
            <stop offset="0.37" stop-color="#d58555"></stop>
            <stop offset="0.43" stop-color="#cf9075"></stop>
            <stop offset="0.57" stop-color="#b9ada8"></stop>
            <stop offset="0.8" stop-color="#d6cccb"></stop>
            <stop offset="1" stop-color="#ede7e3"></stop>
          </linearGradient>
        </defs>
        ${ANTARCTICA.map((p) => svg`<polygon fill="#d3d3d3" points=${coastline(p)}></polygon>`)}
        <g>${land(AMERICAS)}</g>
        <g transform="translate(1020 60)">${land(AFRICA_EURASIA)}</g>
        <g transform="translate(1500 0)">${land(ASIA_PACIFIC)}</g>
        <rect x="2380" y="27" width="59" height="720" fill="url(#scale)"></rect>
        <text class="bar-label" x="2446" y="141">600,000</text>
        <text class="bar-label" x="2446" y="347">400,000</text>
        <text class="bar-label" x="2446" y="556">200,000</text>
      </svg>`;
  }

  render() {
    return html`
      ${this.toolbar()}
      <div class="page">
        ${this.sidebar()}
        <main class="main">
          <button class="burger" aria-label="App menu">
            <svg width="24" height="24" viewBox="0 0 24 24" stroke="#31333f" stroke-width="2"><path d="M3 7H21M3 12H21M3 17H21"></path></svg>
          </button>
          <h1>Interactive COVID-19 Dashboard</h1>
          <h2>Reported COVID-19 cases per million people</h2>
          ${this.map()}
          <h2>Details for Austria</h2>
          <div class="columns">
            <section><h3>Daily COVID-19 cases</h3>${lineChart(CASES)}</section>
            <section><h3>Daily COVID-19 deaths</h3>${lineChart(DEATHS)}</section>
          </div>
          <h3 class="vaccinated">Percentage of vaccinated people</h3>
          ${areaChart()}
        </main>
      </div>`;
  }
}
